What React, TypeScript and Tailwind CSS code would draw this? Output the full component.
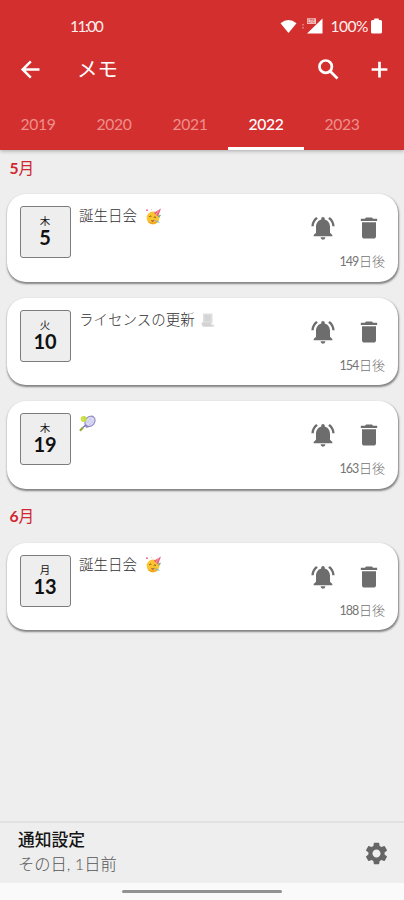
import React from 'react';
import { MdDelete, MdNotificationsActive, MdSettings } from 'react-icons/md';

type IconName = 'party' | 'page' | 'tennis';

interface Memo {
  weekday: string;
  day: string;
  text: string;
  emoji: IconName;
  left: string;
}

const may: Memo[] = [
  { weekday: '木', day: '5', text: '誕生日会', emoji: 'party', left: '149' },
  { weekday: '火', day: '10', text: 'ライセンスの更新', emoji: 'page', left: '154' },
  { weekday: '木', day: '19', text: '', emoji: 'tennis', left: '163' },
];

const june: Memo[] = [{ weekday: '月', day: '13', text: '誕生日会', emoji: 'party', left: '188' }];

const years = ['2019', '2020', '2021', '2022', '2023'];

function Party() {
  return (
    <svg className="ml-[8px] h-[17px] w-[17px]" viewBox="0 0 17 17">
      <circle cx="8" cy="10" r="6.4" fill="#fbc531" />
      <path d="M2.6 13.2c2 3.4 7.600 4 10.400.4-3 1.400-7.400 1.300-10.400-.4z" fill="#f0a020" />
      <path d="M16 .6 8.800 4.800l4.200 3.800z" fill="#e8607a" />
      <path d="M13.600 2 11 6.800" stroke="#f7a4b0" strokeWidth="1" />
      <path d="M4.200 8.800q1-1.200 2.200-.4M8.800 9.400q1-1 2.200.2" stroke="#7a5418" strokeWidth="1" fill="none" />
      <path d="M6 11.800q2.200 1.200 3.600-.2-.4 2.600-2 2.400t-1.600-2.200z" fill="#b8642a" />
      <path d="m9.800 12.600 4.600 1.800" stroke="#6fb0cf" strokeWidth="1" />
      <path d="m13.600 9.400 1.800-2.600" stroke="#58a9a0" strokeWidth="1.300" />
      <circle cx="2" cy="2.200" r=".9" fill="#e75a85" />
      <circle cx="6.500" cy="1.500" r=".6" fill="#f5bcc6" />
    </svg>
  );
}

function Page() {
  return (
    <svg className="ml-[5px] h-[16px] w-[16px]" viewBox="0 0 16 16">
      <path d="M3 1.500h9.500v10H3z" fill="#dedede" />
      <path d="M1.500 10.500h9.500q0 3.500 3.800 3.800H3.500q-2-.5-2-3.800z" fill="#d4d4d4" />
      <path d="M11 10.500q.5 3 3.800 3.400l-2-2.700z" fill="#eeeeee" />
      <path d="M4.500 4h6M4.500 6h6M4.500 8h6M2.500 14h11.500" stroke="#c6c6c6" strokeWidth=".8" />
    </svg>
  );
}

function Tennis() {
  return (
    <svg className="h-[17px] w-[17px]" viewBox="0 0 17 17">
      <path d="M1 15.700 4 12.400" stroke="#93a83a" strokeWidth="2.200" />
      <path d="m3.800 12.600 3.400-2.900M6.800 12l3-.4M6.300 11.500l.2-3" stroke="#7770b5" strokeWidth="1.300" />
      <ellipse cx="11" cy="6.300" rx="5.600" ry="4.600" transform="rotate(-45 11 6.300)" fill="#dcdcf5" stroke="#8d88c4" strokeWidth="1.100" />
      <path d="m8 5.500 5 5M10 3.500l5 5M7.500 8l6-6M10 10l5.500-5.500" stroke="#bbb8e2" strokeWidth=".5" />
      <circle cx="4.700" cy="4" r="3" fill="#c8dc3b" />
      <path d="M2.800 2.300q2 1.200 1.200 4" stroke="#e7f08d" strokeWidth=".7" fill="none" />
    </svg>
  );
}

function Emoji({ name }: { name: IconName }) {
  if (name === 'party') return <Party />;
  if (name === 'page') return <Page />;
  return <Tennis />;
}

function Card({ memo }: { memo: Memo }) {
  return (
    <article className="flex h-[87.500px] w-full shrink-0 rounded-[19px] bg-white shadow-[0.5px_1.5px_2px_0px_rgba(0,0,0,0.45)]">
      <div className="mt-[12px] ml-[12.500px] flex h-[52px] w-[51px] flex-col items-center rounded-[3px] border border-[#7c7c7c] bg-[#eeeeee] pt-[7px] text-[#111]">
        <span className="text-[10.500px] leading-[15px]">{memo.weekday}</span>
        <span className="text-[20px] leading-[17px] font-bold">{memo.day}</span>
      </div>
      <div className="mt-[13px] ml-[8.500px] flex h-[18px] flex-1 items-center text-[14.500px] leading-[18px] font-light whitespace-nowrap text-[#333]">
        {memo.text && <span>{memo.text}</span>}
        <Emoji name={memo.emoji} />
      </div>
      <div className="flex w-[92px] flex-col items-end pt-[20px] pr-[13px]">
        <div className="flex gap-[18px] pr-[2px] text-[28px] text-[#6d6d6d]">
          <MdNotificationsActive />
          <MdDelete />
        </div>
        <span className="mt-[10px] text-[13px] leading-[18px] whitespace-nowrap text-[#757575]">
          <span className="text-[12.500px] tracking-[-0.9px]">{memo.left}</span>
          <span className="ml-[0.500px] font-light">日後</span>
        </span>
      </div>
    </article>
  );
}

function StatusBar() {
  return (
    <div className="flex h-[42px] items-center pt-[10px] pr-[22px] pl-[70px] text-[15.500px] leading-[20px] text-[#fff0ee]">
      <span className="tracking-[-1.5px]">11:00</span>
      <div className="ml-auto flex items-center">
        <svg className="h-[15px] w-[17px]" viewBox="0 0 17 15">
          <path d="M.5 4.200Q8.500-2 16.500 4.200L8.500 14z" fill="#fff" />
        </svg>
        <svg className="ml-[4px] h-[16px] w-[22px]" viewBox="0 0 22 16">
          <path d="M21.500.5v15H6z" fill="#fff" />
          <path d="M2 6v1.500M2 9v1.500" stroke="#ec9a95" strokeWidth="1.300" />
          <rect x="6" y=".3" width="9" height="5.600" fill="#f6c9c6" />
          <text x="6.400" y="5" fontSize="4.800" fontWeight="700" fill="#d85a56">LTE</text>
        </svg>
        <span className="ml-[8px] tracking-[-0.5px]">100%</span>
        <svg className="ml-[3px] h-[16px] w-[11px]" viewBox="0 0 11 16">
          <path d="M3.200.5h4.600V2H9.500Q11 2 11 3.500v10.500Q11 15.500 9.500 15.500h-8Q0 15.500 0 14V3.500Q0 2 1.500 2h1.700z" fill="#fff" />
        </svg>
      </div>
    </div>
  );
}

function HeaderIcon({ className, d }: { className: string; d: string }) {
  return (
    <svg className={className} viewBox="0 0 24 24" fill="none" stroke="currentColor">
      <path d={d} />
    </svg>
  );
}

export default function App() {
  return (
    <div className="flex h-[900px] w-[404px] flex-col overflow-hidden bg-[#eeeeee] font-['Lato','Noto_Sans_CJK_JP',sans-serif]">
      <header className="z-10 flex h-[149.500px] shrink-0 flex-col bg-[#d32f2f] text-white shadow-[0_1px_4px_rgba(0,0,0,0.3)]">
        <StatusBar />
        <div className="flex h-[54px] items-center pr-[11px] pl-[17px]">
          <HeaderIcon className="size-[27px] stroke-[2.2]" d="M20 12H5.500M12.300 4.700 5 12l7.300 7.300" />
          <h1 className="ml-[33px] text-[20.500px] leading-[28px]">メモ</h1>
          <HeaderIcon
            className="ml-auto size-[27px] stroke-[2.400]"
            d="M15 9.500a5.500 5.500 0 1 1-11 0a5.500 5.500 0 0 1 11 0M13.500 13.500 20 20"
          />
          <HeaderIcon className="ml-[24px] size-[27px] stroke-[2.400]" d="M12 5v14M5 12h14" />
        </div>
        <nav className="flex flex-1 text-[15.700px] tracking-[-0.3px]">
          {years.map((year) => (
            <div
              key={year}
              className={
                year === '2022'
                  ? 'flex w-[76px] items-center justify-center border-b-[3px] border-white pt-[7px] font-medium text-white'
                  : 'flex w-[76px] items-center justify-center border-b-[3px] border-transparent pt-[7px] text-[#ed908b]'
              }
            >
              {year}
            </div>
          ))}
        </nav>
      </header>
      <main className="flex flex-1 flex-col pr-[6px] pl-[7px]">
        <h2 className="flex h-[44.500px] shrink-0 items-center pb-[5px] pl-[2.500px] text-[15.700px] text-[#cf2730]">
          <span className="font-bold">5</span>月
        </h2>
        <div className="flex flex-col gap-[16px]">
          {may.map((memo) => (
            <Card key={memo.left} memo={memo} />
          ))}
        </div>
        <h2 className="flex h-[54px] shrink-0 items-center pt-[2px] pl-[2.500px] text-[15.700px] text-[#cf2730]">
          <span className="font-bold">6</span>月
        </h2>
        {june.map((memo) => (
          <Card key={memo.left} memo={memo} />
        ))}
      </main>
      <footer className="flex h-[62px] shrink-0 items-center justify-between border-t-2 border-[#e1e1e1] pr-[14px] pl-[18px]">
        <div className="flex flex-col pb-[3px]">
          <span className="text-[16.800px] leading-[25px] font-medium text-[#151515]">通知設定</span>
          <span className="text-[16.300px] leading-[24px] font-light text-[#555]">その日, 1日前</span>
        </div>
        <MdSettings className="text-[27px] text-[#666]" />
      </footer>
      <div className="flex h-[17px] shrink-0 justify-center bg-[#fafafa] pt-[7px]">
        <div className="h-[3px] w-[160px] rounded-full bg-[#929292]" />
      </div>
    </div>
  );
}
